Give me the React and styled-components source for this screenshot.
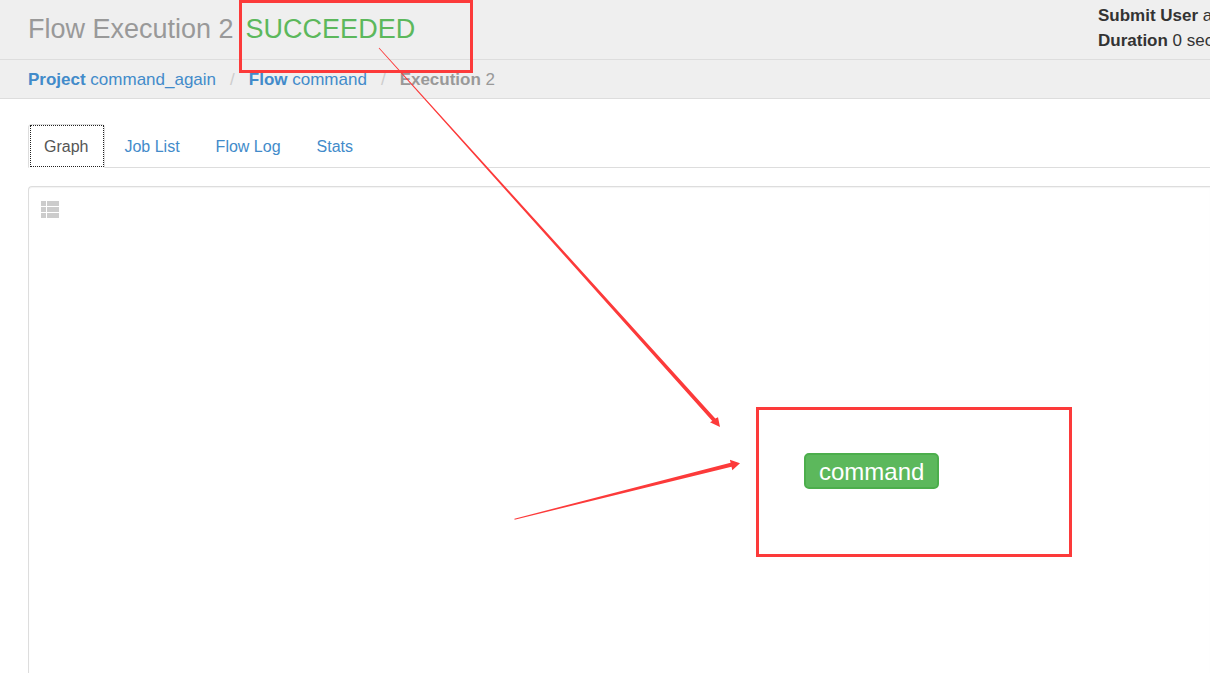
import React from "react";
import styled, { createGlobalStyle } from "styled-components";

const GlobalStyle = createGlobalStyle`
  * { box-sizing: border-box; }
  body {
    margin: 0;
    background: #fff;
    color: #333;
    font-family: "Liberation Sans", Arial, Helvetica, sans-serif;
    font-size: 17px;
  }
`;

const Page = styled.div`
  position: relative;
  display: flex;
  flex-direction: column;
  height: 100vh;
  overflow: hidden;
`;

const Header = styled.header`
  display: flex;
  justify-content: space-between;
  padding: 0 0 0 28px;
  background: #efefef;
  border-bottom: 1px solid #ddd;
`;

const Title = styled.h1`
  display: flex;
  gap: 12px;
  margin: 0;
  padding: 13px 0 14px;
  font-size: 27px;
  font-weight: 400;
  line-height: 32px;
  color: #999;
  white-space: nowrap;
`;

const Status = styled.span`
  color: #5cb85c;
`;

const Summary = styled.div`
  flex: none;
  width: 112px;
  padding-top: 3px;
  overflow: hidden;
  white-space: nowrap;
  line-height: 25px;
`;

const Breadcrumb = styled.ol`
  display: flex;
  margin: 0;
  padding: 7px 28px 6px;
  list-style: none;
  line-height: 25px;
  background: #efefef;
  border-bottom: 1px solid #ddd;
`;

const Crumb = styled.li`
  color: #999;
  white-space: nowrap;

  & + &::before {
    content: "/";
    padding: 0 14px;
    color: #ccc;
  }
`;

const CrumbLink = styled.a`
  color: #428bca;
  text-decoration: none;
`;

const Main = styled.main`
  display: flex;
  flex-direction: column;
  flex: 1;
  min-height: 0;
  padding: 25px 0 0 28px;
`;

const Tabs = styled.nav`
  display: flex;
  gap: 3px;
  margin-bottom: 18px;
  border-bottom: 1px solid #ddd;
`;

const Tab = styled.a`
  position: relative;
  margin-bottom: -1px;
  padding: 11px 16px 9px 15px;
  border: 1px solid ${(p) => (p.$active ? "#ddd" : "transparent")};
  border-bottom-color: ${(p) => (p.$active ? "#fff" : "transparent")};
  border-radius: 4px 4px 0 0;
  background: ${(p) => (p.$active ? "#fff" : "transparent")};
  color: ${(p) => (p.$active ? "#555" : "#428bca")};
  font-size: 16px;
  line-height: 22px;
  text-decoration: none;

  &::after {
    content: ${(p) => (p.$active ? '""' : "none")};
    position: absolute;
    inset: 0 0 0 1px;
    border: 1px dotted #222;
  }
`;

const GraphPanel = styled.section`
  position: relative;
  flex: 1;
  padding: 14px 12px;
  border: 1px solid #ddd;
  border-width: 1px 0 0 1px;
  border-radius: 4px 0 0 0;
  box-shadow: inset 0 1px 1px rgba(0, 0, 0, 0.05);
`;

const ListButton = styled.button`
  display: block;
  padding: 0;
  border: 0;
  background: none;
  color: #ccc;
  cursor: pointer;

  svg {
    display: block;
  }
`;

const JobNode = styled.button`
  position: absolute;
  left: 775px;
  top: 266px;
  height: 36px;
  padding: 1px 13px 0;
  border: 2px solid #4cae4c;
  border-radius: 5px;
  background: #5cb85c;
  color: #fff;
  font-family: inherit;
  font-size: 24px;
  line-height: 32px;
`;

const Annotations = styled.svg`
  position: absolute;
  left: 0;
  top: 0;
  pointer-events: none;
`;

const tabs = ["Graph", "Job List", "Flow Log", "Stats"];

export default function App() {
  return (
    <Page>
      <GlobalStyle />
      <Header>
        <Title>
          <span>Flow Execution 2</span>
          <Status>SUCCEEDED</Status>
        </Title>
        <Summary>
          <div><b>Submit User</b> azkaban</div>
          <div><b>Duration</b> 0 sec</div>
        </Summary>
      </Header>
      <Breadcrumb>
        <Crumb><CrumbLink href="#project"><b>Project</b> command_again</CrumbLink></Crumb>
        <Crumb><CrumbLink href="#flow"><b>Flow</b> command</CrumbLink></Crumb>
        <Crumb><b>Execution</b> 2</Crumb>
      </Breadcrumb>
      <Main>
        <Tabs>
          {tabs.map((name, i) => (
            <Tab key={name} href="#tab" $active={i === 0}>{name}</Tab>
          ))}
        </Tabs>
        <GraphPanel>
          <ListButton aria-label="Show job list">
            <svg width="18" height="17" fill="currentColor" shapeRendering="crispEdges">
              {[0, 6, 12].map((y) => (
                <React.Fragment key={y}>
                  <rect x="0" y={y} width="5" height="5" />
                  <rect x="6" y={y} width="12" height="5" />
                </React.Fragment>
              ))}
            </svg>
          </ListButton>
          <JobNode>command</JobNode>
        </GraphPanel>
      </Main>
      <Annotations width="1210" height="673" aria-hidden="true">
        <g fill="none" stroke="#fc3a3a" strokeWidth="3">
          <rect x="240.5" y="1.5" width="231" height="70" />
          <rect x="757.5" y="408.5" width="313" height="147" />
        </g>
        <g fill="#fc3a3a">
          <path d="M378.7 48.2 L379.3 47.7 L715.3 418.4 L718 417.3 L720 427 L710 422.3 L712.3 420.9 Z" />
          <path d="M514.4 518.7 L730.6 462.7 L729.9 459.8 L740 463.2 L732.3 470.2 L731.5 466.7 L514.6 519.7 Z" />
        </g>
      </Annotations>
    </Page>
  );
}
